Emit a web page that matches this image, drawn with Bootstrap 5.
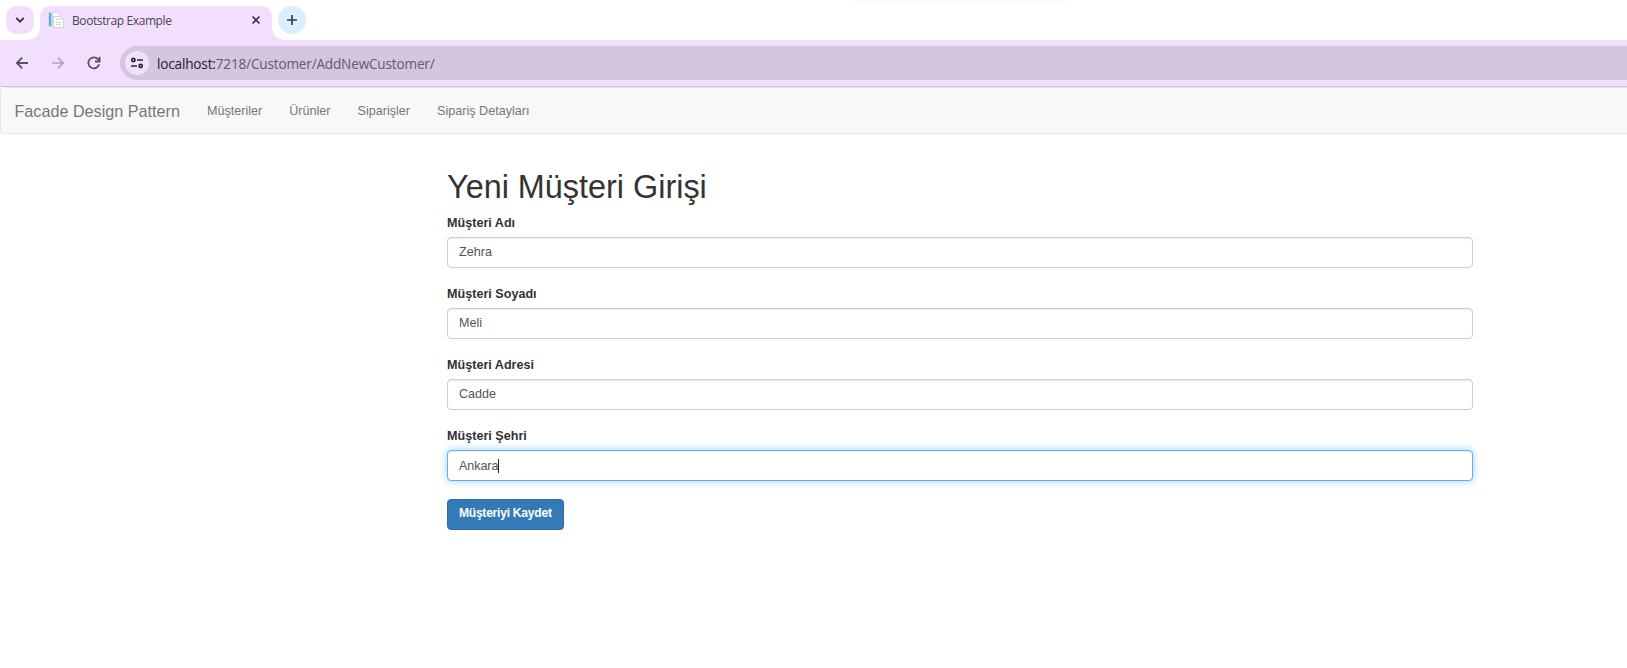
<!DOCTYPE html>
<html lang="tr">
<head>
<meta charset="utf-8">
<meta name="viewport" content="width=device-width, initial-scale=1">
<title>Bootstrap Example</title>
<link href="https://cdn.jsdelivr.net/npm/bootstrap@5.3.0/dist/css/bootstrap.min.css" rel="stylesheet">
<style>
body{font-family:"Liberation Sans",Arial,sans-serif;font-size:12.6px;line-height:18px;color:#333;background:#fff;overflow:hidden}
svg{display:block;flex:none}
.browser-ui{font-family:"Open Sans","Noto Sans",sans-serif;color:#4a464f}
.tabstrip{height:40px;padding-left:6px}
.tabstrip::after{content:"";position:absolute;left:854px;top:-10px;width:214px;height:10px;box-shadow:0 0 7px rgba(0,0,0,.06)}
.strip-left{width:34px;height:40px;padding-top:6px;position:relative}
.strip-left::before{content:"";position:absolute;right:0;bottom:0;width:12px;height:12px;background:radial-gradient(circle at 0 0,transparent 11.5px,#f2dffd 12px)}
.search-tabs{width:28px;height:28px;border-radius:10px;background:#f2dffd}
.open-tab{width:232px;height:34px;margin-top:6px;padding:0 10px 6px 8px;border-radius:10px 10px 0 0;background:#f2dffd;position:relative}
.open-tab::after{content:"";position:absolute;right:-12px;bottom:0;width:12px;height:12px;background:radial-gradient(circle at 100% 0,transparent 11.5px,#f2dffd 12px)}
.tab-title{font-size:12px;line-height:16px;letter-spacing:-.4px;margin:2px 0 0 8px}
.plus-btn{width:28px;height:28px;margin:6px 0 0 6px;background:#daeffd}
.toolbar{height:47px;background:#f2dffd;border-bottom:1px solid #d5c5df;padding-left:14px;gap:20px}
.address{height:34px;border-radius:17px 0 0 17px;background:#d5c5df;padding-left:5px;margin-left:-2px}
.site-info{width:24px;height:24px;background:#f2dffd}
.url{font-size:13.6px;line-height:20px;color:#625a68;margin:1px 0 0 8px;letter-spacing:-.18px}
.url b{font-weight:400;color:#27222b}
.site-nav{height:47px;background:#f8f8f8;border:1px solid #e7e7e7;border-right:0;border-radius:4px 0 0 4px;padding:0 0 0 13.4px}
.site-nav .navbar-brand{font-size:16.2px;line-height:18px;color:#777;padding:0;margin:0 27px 0 0}
.site-nav .nav-link{color:#777;padding:0;margin-right:27px;white-space:nowrap}
.entry{width:1026px;margin-left:447px;padding-top:35px}
.entry h1{font-size:32.4px;line-height:36px;font-weight:400;margin:0 0 9px}
.field{height:71px}
.field label{display:block;height:18px;font-weight:700;margin-bottom:5px}
.field .form-control{height:31px;padding:5px 11px;font-size:12.6px;line-height:18px;color:#555;border:1px solid #ccc;border-radius:4px;box-shadow:inset 0 1px 1px rgba(0,0,0,.075)}
.field .form-control.active{border-color:#66afe9;box-shadow:inset 0 1px 1px rgba(0,0,0,.075),0 0 8px rgba(102,175,233,.6);letter-spacing:-.1px}
.caret{width:1px;height:14px;background:#222}
.save{width:117px;height:31px;margin-top:1px;padding:0 0 3px;background:#337ab7;border:1px solid #2e6da4;border-radius:4px;color:#fff;font-size:12.6px;line-height:18px;font-weight:700;letter-spacing:-.26px;white-space:nowrap}
.save span{display:inline-block;transform:scaleX(.96)}
</style>
<script src="https://cdn.jsdelivr.net/npm/bootstrap@5.3.0/dist/js/bootstrap.bundle.min.js"></script>
</head>
<body>
<header class="browser-ui">
  <div class="tabstrip d-flex">
    <div class="strip-left"><div class="search-tabs d-flex align-items-center justify-content-center">
      <svg width="10" height="6" viewBox="0 0 10 6" fill="none" stroke="#3b3540" stroke-width="2"><path d="M1.2 .9 5 4.6 8.8 .9"/></svg>
    </div></div>
    <div class="open-tab d-flex align-items-center">
      <svg width="16" height="16" viewBox="0 0 16 16"><path fill="#fafafa" stroke="#cfd0d2" stroke-width=".7" d="M.5.5h11v14H.5z"/><path fill="#5eaed6" d="M1 1h2.5v13H1z"/><path fill="#b9dced" d="M3.5 1H5v13H3.5z"/><path fill="#fbfbf8" stroke="#c6c7c8" stroke-width=".7" d="M5.5 4.5h7l3 3v8h-10z"/><path fill="none" stroke="#d4d5d3" d="M8 7.5h4M8 10.5h5M8 12.5h5"/><path fill="#ddd" d="m12.5 4.5 3 3h-3z"/></svg>
      <span class="tab-title flex-grow-1">Bootstrap Example</span>
      <svg width="12" height="12" viewBox="0 0 12 12" stroke="#3b3540" stroke-width="1.6"><path d="m2.5 2.5 7 7m0-7-7 7"/></svg>
    </div>
    <div class="plus-btn rounded-circle d-flex align-items-center justify-content-center">
      <svg width="12" height="12" viewBox="0 0 12 12" stroke="#3b3f46" stroke-width="1.7"><path d="M6 1v10M1 6h10"/></svg>
    </div>
  </div>
  <div class="toolbar d-flex align-items-center">
    <svg width="16" height="16" viewBox="0 0 16 16" fill="none" stroke="#5a515f" stroke-width="1.8"><path d="M14 8H3M8.2 2.6 2.8 8l5.4 5.4"/></svg>
    <svg width="16" height="16" viewBox="0 0 16 16" fill="none" stroke="#b3a5bc" stroke-width="1.7"><path d="M2 8h11M7.8 2.6 13.2 8l-5.4 5.4"/></svg>
    <svg width="16" height="16" viewBox="0 0 16 16" fill="none" stroke="#5a515f" stroke-width="1.8"><path d="M13.2 9.3A5.5 5.5 0 1 1 12 4.2l1.6 1.9"/><path d="M13.6 1.8v4.7H9"/></svg>
    <div class="address d-flex align-items-center flex-grow-1">
      <div class="site-info rounded-circle d-flex align-items-center justify-content-center">
        <svg width="14" height="12" viewBox="0 0 14 12" fill="none" stroke="#2b2530" stroke-width="1.7"><circle cx="3.4" cy="3" r="1.6"/><path d="M7 3h6M1 9h6"/><circle cx="10.7" cy="9" r="1.6"/></svg>
      </div>
      <span class="url"><b>localhost:</b>7218/Customer/AddNewCustomer/</span>
    </div>
  </div>
</header>
<nav class="site-nav d-flex align-items-center">
  <a class="navbar-brand" href="#">Facade Design Pattern</a>
  <a class="nav-link" href="#">Müşteriler</a>
  <a class="nav-link" href="#">Ürünler</a>
  <a class="nav-link" href="#">Siparişler</a>
  <a class="nav-link" href="#">Sipariş Detayları</a>
</nav>
<main class="entry">
  <h1>Yeni Müşteri Girişi</h1>
  <form>
    <div class="field"><label>Müşteri Adı</label><div class="form-control">Zehra</div></div>
    <div class="field"><label>Müşteri Soyadı</label><div class="form-control">Meli</div></div>
    <div class="field"><label>Müşteri Adresi</label><div class="form-control">Cadde</div></div>
    <div class="field"><label>Müşteri Şehri</label><div class="form-control active d-flex align-items-center">Ankara<span class="caret"></span></div></div>
    <button type="button" class="btn save"><span>Müşteriyi Kaydet</span></button>
  </form>
</main>
</body>
</html>
